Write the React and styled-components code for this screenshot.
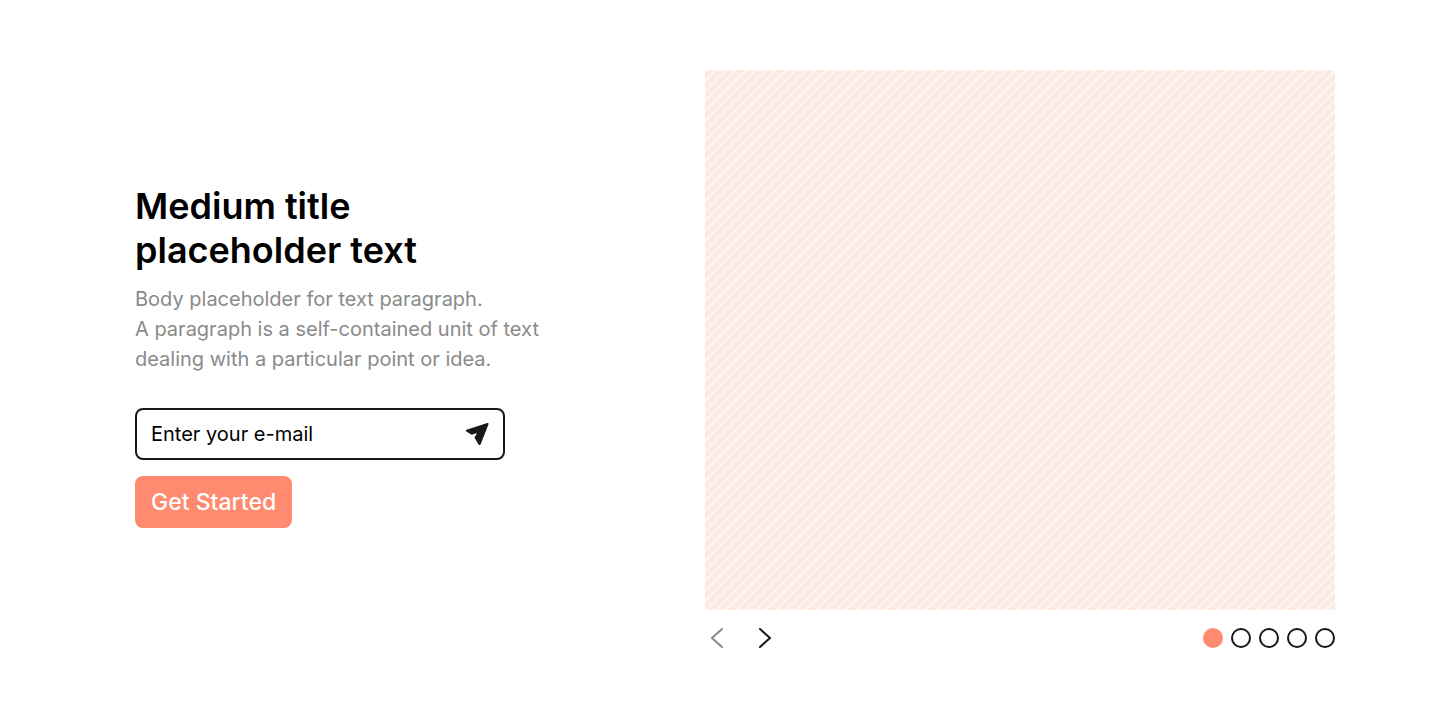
import React, {useState} from 'react';
import styled, {createGlobalStyle} from 'styled-components';

const GlobalStyle = createGlobalStyle`
    * {
        box-sizing: border-box;
    }
    body {
        margin: 0;
        background: #ffffff;
        color: #000000;
        font-family: Inter, "Liberation Sans", sans-serif;
    }
    button, input {
        font-family: inherit;
    }
`;

const Hero = styled.section`
    display: grid;
    grid-template-columns: 19fr 21fr;
    align-items: center;
    max-width: 1440px;
    margin: 0 auto;
    padding: 70px 105px 70px 135px;
`;

const Intro = styled.div`
    padding-bottom: 8px;
`;

const Title = styled.h1`
    margin: 0;
    font-size: 36px;
    font-weight: 600;
    line-height: 44px;
`;

const Body = styled.p`
    margin: 12px 0 34px;
    color: #8a8a8a;
    font-size: 20px;
    line-height: 30px;
`;

const SignUp = styled.form`
    display: flex;
    flex-direction: column;
    align-items: flex-start;
    gap: 16px;
`;

const Field = styled.div`
    display: flex;
    align-items: center;
    width: 100%;
    max-width: 370px;
    height: 52px;
    padding: 0 14px;
    border: 2px solid #18181b;
    border-radius: 8px;
`;

const EmailInput = styled.input`
    flex: 1;
    min-width: 0;
    height: 100%;
    padding: 0;
    border: none;
    outline: none;
    background: none;
    color: #000000;
    font-size: 20px;
    &::placeholder {
        color: #000000;
        opacity: 1;
    }
`;

const IconButton = styled.button`
    display: flex;
    padding: 0;
    border: none;
    background: none;
    color: #18181b;
    cursor: pointer;
    &:disabled {
        color: #8a8a8a;
        cursor: default;
    }
`;

const SubmitButton = styled.button`
    height: 52px;
    padding: 0 16px;
    border: none;
    border-radius: 8px;
    background: #ff8a6f;
    color: #ffffff;
    font-size: 23px;
    font-weight: 500;
    cursor: pointer;
`;

const Slide = styled.div`
    aspect-ratio: 7 / 6;
    overflow: hidden;
    svg {
        display: block;
    }
`;

const Controls = styled.nav`
    display: flex;
    align-items: center;
    justify-content: space-between;
    margin-top: 16px;
`;

const Arrows = styled.div`
    display: flex;
    gap: 24px;
`;

const Dots = styled.div`
    display: flex;
    gap: 8px;
`;

const Dot = styled.button`
    width: 20px;
    height: 20px;
    padding: 0;
    border: 2px solid ${props => props.$active ? '#ff8a6f' : '#18181b'};
    border-radius: 50%;
    background: ${props => props.$active ? '#ff8a6f' : 'transparent'};
    cursor: pointer;
`;

const SendIcon = () => (
    <svg width="24" height="24" viewBox="0 0 24 24" fill="currentColor" aria-hidden="true">
        <path d="M22.300 1 1.500 7.800C.700 8.100.6 9.200 1.400 9.600L6.200 12.500Q6.900 12.900 7.700 12.600L11.200 11.200Q11.900 11.200 11.600 11.900L9.800 14.700Q9.300 15.500 9.800 16.300L13.500 22.400C14.100 23.300 15.300 23.200 15.700 22.200L23.500 2.200C23.800 1.400 23.100.7 22.300 1Z"/>
    </svg>
);

const Chevron = ({points}) => (
    <svg
        width="24"
        height="24"
        viewBox="0 0 24 24"
        fill="none"
        stroke="currentColor"
        strokeWidth="2"
        strokeLinecap="round"
        aria-hidden="true"
    >
        <polyline points={points}/>
    </svg>
);

const Stripes = () => (
    <svg width="100%" height="100%" aria-hidden="true">
        <defs>
            <pattern id="stripes" width="10" height="10" patternUnits="userSpaceOnUse">
                <rect width="10" height="10" fill="#fcebe4"/>
                <path d="M-1 12 12-1M-1 2 2-1M9 12 12 9" stroke="#ffffff" strokeOpacity="0.8" strokeWidth="1.4"/>
            </pattern>
        </defs>
        <rect width="100%" height="100%" fill="url(#stripes)"/>
    </svg>
);

const slides = [1, 2, 3, 4, 5];

const Carousel = () => {
    const [current, setCurrent] = useState(0);

    return (
        <div>
            <Slide>
                <Stripes/>
            </Slide>
            <Controls aria-label="Slides">
                <Arrows>
                    <IconButton
                        type="button"
                        aria-label="Previous slide"
                        disabled={current === 0}
                        onClick={() => setCurrent(current - 1)}
                    >
                        <Chevron points="17,3 7,12 17,21"/>
                    </IconButton>
                    <IconButton
                        type="button"
                        aria-label="Next slide"
                        disabled={current === slides.length - 1}
                        onClick={() => setCurrent(current + 1)}
                    >
                        <Chevron points="7,3 17,12 7,21"/>
                    </IconButton>
                </Arrows>
                <Dots>
                    {slides.map((slide, index) => (
                        <Dot
                            key={slide}
                            type="button"
                            aria-label={`Slide ${slide}`}
                            $active={index === current}
                            onClick={() => setCurrent(index)}
                        />
                    ))}
                </Dots>
            </Controls>
        </div>
    );
};

const App = () => (
    <>
        <GlobalStyle/>
        <Hero>
            <Intro>
                <Title>Medium title<br/>placeholder text</Title>
                <Body>
                    Body placeholder for text paragraph.<br/>
                    A paragraph is a self-contained unit of text<br/>
                    dealing with a particular point or idea.
                </Body>
                <SignUp onSubmit={event => event.preventDefault()}>
                    <Field>
                        <EmailInput type="email" aria-label="E-mail" placeholder="Enter your e-mail"/>
                        <IconButton type="submit" aria-label="Send">
                            <SendIcon/>
                        </IconButton>
                    </Field>
                    <SubmitButton type="submit">Get Started</SubmitButton>
                </SignUp>
            </Intro>
            <Carousel/>
        </Hero>
    </>
);

export default App;
